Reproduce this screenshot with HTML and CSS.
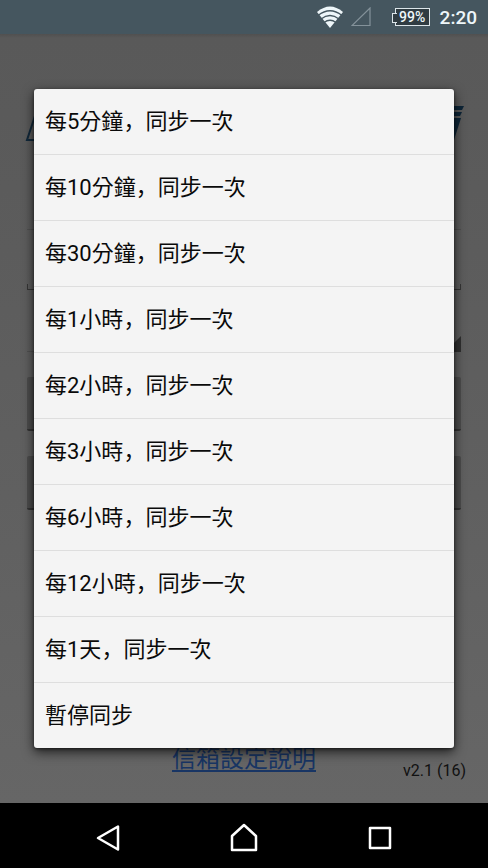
FILE: index.html
```html
<!DOCTYPE html>
<html lang="zh-Hant">
<head>
<meta charset="utf-8">
<meta name="viewport" content="width=device-width, initial-scale=1">
<title>信箱同步</title>
<link rel="stylesheet" href="styles.css">
</head>
<body>
<header class="status">
  <svg class="wifi" width="28" height="24" viewBox="0 0 28 24" aria-hidden="true">
    <path d="M1 7Q14 -4 27 7L14 23Z" fill="#eef6f9"/>
    <path d="M2 10.500Q14 1 26 10.500M5 14Q14 7 23 14M8 17.500Q14 13 20 17.500" fill="none" stroke="#45565f" stroke-width="1.300"/>
  </svg>
  <svg class="signal" width="20" height="20" viewBox="0 0 20 20" aria-hidden="true">
    <path d="M1 18.500H19V1Z" fill="none" stroke="#84929a" stroke-width="1.200"/>
  </svg>
  <span class="battery">99%</span>
  <time class="clock">2:20</time>
</header>
<main class="screen">
  <div class="page">
    <svg class="logo" viewBox="0 0 440 36" aria-hidden="true">
      <path d="M12 7L3 34H24" fill="none" stroke="#11283a" stroke-width="2"/>
      <path d="M424 0H440L438 4H430V6H438L436 10H424ZM424 12H437L430 34H424Z" fill="#0d2537"/>
    </svg>
    <form class="form">
      <input class="field" type="text" aria-label="帳號">
      <input class="field field-active" type="password" aria-label="密碼">
      <div class="spinner"><select class="field" aria-label="同步頻率"></select></div>
      <button class="action" type="button" aria-label="儲存"></button>
      <button class="action" type="button" aria-label="同步"></button>
    </form>
    <footer class="footer">
      <a class="help" href="#help">信箱設定說明</a>
      <span class="version">v2.1 (16)</span>
    </footer>
  </div>
  <div class="overlay">
    <ul class="dialog" role="dialog" aria-label="同步頻率">
      <li><button class="option" type="button">每5分鐘<span class="comma" lang="zh-Hans">，</span>同步一次</button></li>
      <li><button class="option" type="button">每10分鐘<span class="comma" lang="zh-Hans">，</span>同步一次</button></li>
      <li><button class="option" type="button">每30分鐘<span class="comma" lang="zh-Hans">，</span>同步一次</button></li>
      <li><button class="option" type="button">每1小時<span class="comma" lang="zh-Hans">，</span>同步一次</button></li>
      <li><button class="option" type="button">每2小時<span class="comma" lang="zh-Hans">，</span>同步一次</button></li>
      <li><button class="option" type="button">每3小時<span class="comma" lang="zh-Hans">，</span>同步一次</button></li>
      <li><button class="option" type="button">每6小時<span class="comma" lang="zh-Hans">，</span>同步一次</button></li>
      <li><button class="option" type="button">每12小時<span class="comma" lang="zh-Hans">，</span>同步一次</button></li>
      <li><button class="option" type="button">每1天<span class="comma" lang="zh-Hans">，</span>同步一次</button></li>
      <li><button class="option" type="button">暫停同步</button></li>
    </ul>
  </div>
</main>
<nav class="navbar">
  <button class="key" type="button" aria-label="返回">
    <svg width="28" height="30" viewBox="0 0 28 30"><path d="M5 15L25 3.500V26.500Z"/></svg>
  </button>
  <button class="key" type="button" aria-label="首頁">
    <svg width="28" height="30" viewBox="0 0 28 30"><path d="M14 2L26 13V27H2V13Z"/></svg>
  </button>
  <button class="key" type="button" aria-label="最近">
    <svg width="28" height="30" viewBox="0 0 28 30"><path d="M3 5H23V25H3Z"/></svg>
  </button>
</nav>
</body>
</html>
```
FILE: styles.css
```css
* {
  box-sizing: border-box;
}

body {
  margin: 0;
  min-height: 100vh;
  display: flex;
  flex-direction: column;
  background: #000;
  font-family: Roboto, "Noto Sans CJK TC", sans-serif;
}

button,
input,
select {
  font: inherit;
  appearance: none;
  border: 0;
  border-radius: 0;
  background: none;
}

.status {
  height: 34px;
  display: flex;
  align-items: center;
  justify-content: flex-end;
  padding: 0 11px;
  background: #45565f;
  color: #eef6f9;
}

.signal {
  margin: 0 24px 0 7px;
}

.battery {
  position: relative;
  width: 35px;
  height: 18px;
  border: 1px solid #dce5e9;
  background: #303c42;
  font-size: 14px;
  font-weight: 500;
  line-height: 16px;
  text-align: center;
}

.battery::before {
  content: "";
  position: absolute;
  left: -4px;
  top: 4px;
  width: 4px;
  height: 8px;
  border: 1px solid #dce5e9;
  border-right: 0;
  background: #303c42;
}

.clock {
  margin-left: 10px;
  font-size: 19px;
  font-weight: 500;
}

.screen {
  position: relative;
  flex: 1;
  display: flex;
  background: linear-gradient(#505050, #595959 4px, #5b5b5b 20%, #606060 60%, #666);
}

.page {
  flex: 1;
  display: flex;
  flex-direction: column;
  padding: 72px 27px 22px;
}

.logo {
  height: 36px;
  margin: 0 -3px;
}

.form {
  display: flex;
  flex-direction: column;
  padding-top: 47px;
}

.field {
  display: block;
  width: 100%;
  height: 41px;
  border-bottom: 1px solid #505050;
}

.field-active {
  height: 60px;
  border-bottom-color: #353535;
  background:
    linear-gradient(#353535, #353535) left bottom / 1px 5px no-repeat,
    linear-gradient(#353535, #353535) right bottom / 1px 5px no-repeat;
}

.spinner {
  position: relative;
  padding-top: 21px;
  margin-bottom: 25px;
}

.spinner::after {
  content: "";
  position: absolute;
  right: 0;
  bottom: 0;
  border-left: 16px solid transparent;
  border-bottom: 16px solid #303030;
}

.action {
  height: 54px;
  margin-bottom: 25px;
  border-bottom: 2px solid #333;
  border-radius: 2px;
  background: #4c4c4c;
}

.footer {
  display: grid;
  grid-template-columns: 1fr auto 1fr;
  align-items: end;
  margin: auto -5px 0;
}

.help {
  color: #183564;
  font-size: 24px;
  line-height: 44px;
  grid-column: 2;
  text-underline-offset: 3px;
}

.version {
  justify-self: end;
  color: #111;
  font-size: 16px;
  line-height: 20px;
}

.overlay {
  position: absolute;
  inset: 0;
  display: flex;
  align-items: center;
  padding: 0 34px;
}

.dialog {
  flex: 1;
  margin: 0;
  padding: 0;
  list-style: none;
  overflow: hidden;
  border-radius: 3px;
  background: #f4f4f4;
  box-shadow: 0 4px 12px rgba(0, 0, 0, 0.7), 0 1px 3px rgba(0, 0, 0, 0.5);
}

.option {
  display: block;
  width: 100%;
  height: 66px;
  padding: 1px 11px 0;
  border-bottom: 1px solid #dedede;
  color: #0a0a0a;
  font-size: 22px;
  line-height: 32px;
  text-align: left;
}

.comma {
  font-family: Roboto, "Noto Sans CJK SC", sans-serif;
}

.dialog li:last-child .option {
  height: 65px;
  border-bottom: 0;
}

.navbar {
  height: 65px;
  display: flex;
  align-items: center;
  justify-content: center;
  background: #000;
}

.key {
  display: flex;
  justify-content: center;
  width: 28%;
  padding: 5px 0 0;
}

.key path {
  fill: none;
  stroke: #fff;
  stroke-width: 2.500;
  stroke-linejoin: round;
}
```
